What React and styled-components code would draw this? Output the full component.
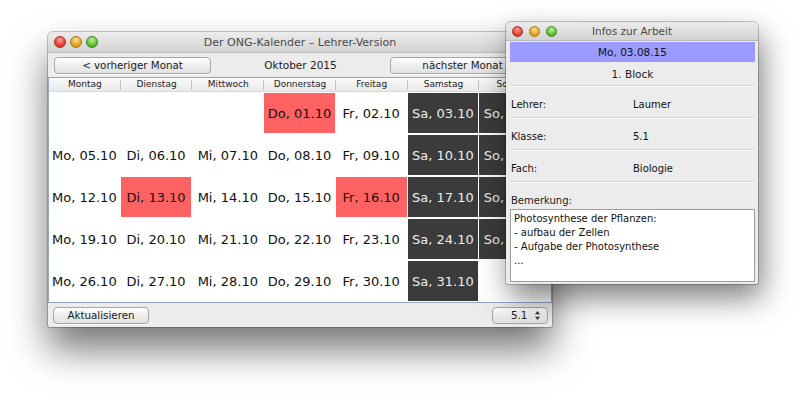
import React from 'react'
import styled, { createGlobalStyle } from 'styled-components'

const GlobalStyle = createGlobalStyle`
  html, body {
    margin: 0;
    padding: 0;
    background: #ffffff;
  }
  body {
    font-family: "DejaVu Sans", "Liberation Sans", sans-serif;
    color: #1a1a1a;
  }
`

const WEEKDAYS = ['Montag', 'Dienstag', 'Mittwoch', 'Donnerstag', 'Freitag', 'Samstag', 'Sonntag']
const SHORT = ['Mo', 'Di', 'Mi', 'Do', 'Fr', 'Sa', 'So']
const MARKED = [1, 13, 16]

// Oktober 2015 starts on a Thursday (index 3)
const buildMonth = () => {
    const cells = []
    for (let i = 0; i < 3; i++) cells.push(null)
    for (let d = 1; d <= 31; d++) cells.push(d)
    while (cells.length < 35) cells.push(null)
    return cells
}

const pad = (n) => String(n).padStart(2, '0')

const Lights = ({ size }) => (
    <LightGroup $size={size}>
        <Light $size={size} $c1="#ff9d94" $c2="#e0352b" $b="#a82a22" />
        <Light $size={size} $c1="#ffe08a" $c2="#e09a1a" $b="#a87516" />
        <Light $size={size} $c1="#bdf29a" $c2="#4fb52a" $b="#3b8a20" />
    </LightGroup>
)

const Stepper = () => (
    <svg width="7" height="11" viewBox="0 0 7 11">
        <path d="M3.5 1 L6 4.2 H1 Z" fill="#333" />
        <path d="M3.5 10 L6 6.8 H1 Z" fill="#333" />
    </svg>
)

const App = () => {
    const cells = buildMonth()
    return (
        <>
            <GlobalStyle />
            <Desktop>
                <Window $x={48} $y={32} $w={504} $h={295} $z={1} $shadow="0 22px 38px rgba(0, 0, 0, 0.55)">
                    <TitleBar $h={20}>
                        <Lights size={12} />
                        <Title $size={11}>Der ONG-Kalender – Lehrer-Version</Title>
                        <span />
                    </TitleBar>
                    <Toolbar>
                        <PushButton $w={157}>&lt; vorheriger Monat</PushButton>
                        <MonthLabel>Oktober 2015</MonthLabel>
                        <PushButton $w={157}>nächster Monat &gt;</PushButton>
                    </Toolbar>
                    <TableFrame>
                        <HeaderRow>
                            {WEEKDAYS.map((w, i) => (
                                <HeaderCell key={w} $last={i === 6}>{w}</HeaderCell>
                            ))}
                        </HeaderRow>
                        <DayGrid>
                            {cells.map((d, i) => {
                                const col = i % 7
                                let kind = 'plain'
                                if (d && col >= 5) kind = 'weekend'
                                else if (d && MARKED.includes(d)) kind = 'marked'
                                return (
                                    <DayCell key={i} $kind={kind}>
                                        {d ? `${SHORT[col]}, ${pad(d)}.10` : ''}
                                    </DayCell>
                                )
                            })}
                        </DayGrid>
                    </TableFrame>
                    <BottomBar>
                        <PushButton $w={96}>Aktualisieren</PushButton>
                        <Select>
                            <span>5.1</span>
                            <Stepper />
                        </Select>
                    </BottomBar>
                </Window>

                <Window $x={506} $y={22} $w={252} $h={262} $z={2} $shadow="4px 14px 30px rgba(0, 0, 0, 0.5)">
                    <TitleBar $h={18}>
                        <Lights size={11} />
                        <Title $size={10.5}>Infos zur Arbeit</Title>
                        <span />
                    </TitleBar>
                    <InfoBody>
                        <DateBar>Mo, 03.08.15</DateBar>
                        <BlockRow>1. Block</BlockRow>
                        <Divider />
                        <FieldRow>
                            <span>Lehrer:</span>
                            <span>Laumer</span>
                        </FieldRow>
                        <Divider />
                        <FieldRow>
                            <span>Klasse:</span>
                            <span>5.1</span>
                        </FieldRow>
                        <Divider />
                        <FieldRow>
                            <span>Fach:</span>
                            <span>Biologie</span>
                        </FieldRow>
                        <Divider />
                        <NoteLabel>Bemerkung:</NoteLabel>
                        <NoteBox>
                            {'Photosynthese der Pflanzen:\n- aufbau der Zellen\n- Aufgabe der Photosynthese\n...'}
                        </NoteBox>
                    </InfoBody>
                </Window>
            </Desktop>
        </>
    )
}

export default App

const Desktop = styled.div`
    position: relative;
    width: 800px;
    height: 395px;
    overflow: hidden;
    background: #ffffff;
`

const Window = styled.section`
    position: absolute;
    left: ${p => p.$x}px;
    top: ${p => p.$y}px;
    width: ${p => p.$w}px;
    height: ${p => p.$h}px;
    z-index: ${p => p.$z};
    display: flex;
    flex-direction: column;
    background: #ececec;
    border-radius: 5px 5px 2px 2px;
    box-shadow: 0 0 0 1px rgba(0, 0, 0, 0.22), ${p => p.$shadow};
    overflow: hidden;
`

const TitleBar = styled.header`
    flex: none;
    height: ${p => p.$h}px;
    display: grid;
    grid-template-columns: 1fr auto 1fr;
    align-items: center;
    background: linear-gradient(#ececec, #d3d3d3);
    border-bottom: 1px solid #b9b9b9;
`

const LightGroup = styled.div`
    display: flex;
    gap: ${p => (p.$size === 12 ? 4 : 6)}px;
    padding-left: 6px;
`

const Light = styled.span`
    width: ${p => p.$size}px;
    height: ${p => p.$size}px;
    border-radius: 50%;
    box-sizing: border-box;
    border: 1px solid ${p => p.$b};
    background: radial-gradient(circle at 50% 30%, ${p => p.$c1} 0%, ${p => p.$c2} 70%);
`

const Title = styled.span`
    font-size: ${p => p.$size}px;
    color: #4a4a4a;
    white-space: nowrap;
`

const Toolbar = styled.div`
    flex: none;
    height: 24px;
    display: flex;
    align-items: center;
    justify-content: space-between;
    padding: 0 5px 0 6px;
`

const PushButton = styled.button`
    width: ${p => p.$w}px;
    height: 17px;
    padding: 0;
    font-family: inherit;
    font-size: 10.3px;
    color: #1a1a1a;
    background: linear-gradient(#ffffff, #ececec 55%, #e2e2e2);
    border: 1px solid #a6a6a6;
    border-radius: 4px;
    box-shadow: 0 1px 0 rgba(255, 255, 255, 0.8);
`

const MonthLabel = styled.span`
    font-size: 10.5px;
    color: #1a1a1a;
`

const TableFrame = styled.div`
    flex: none;
    display: flex;
    flex-direction: column;
    background: #ffffff;
    border: 1px solid #8fa7c9;
    border-left-color: #9aa9bd;
`

const HeaderRow = styled.div`
    display: grid;
    grid-template-columns: repeat(7, 1fr);
    height: 13px;
    background: linear-gradient(#fafafa, #e9e9e9);
    border-bottom: 1px solid #d9d9d9;
`

const HeaderCell = styled.div`
    position: relative;
    font-size: 9px;
    line-height: 13px;
    text-align: center;
    color: #222;
    white-space: nowrap;
    overflow: hidden;

    &::after {
        content: '';
        display: ${p => (p.$last ? 'none' : 'block')};
        position: absolute;
        right: 0;
        top: 2px;
        bottom: 1px;
        width: 1px;
        background: #c4c4c4;
    }
`

const DayGrid = styled.div`
    display: grid;
    grid-template-columns: repeat(7, 1fr);
    grid-auto-rows: 42px;
`

const cellColors = {
    plain: ['transparent', '#111'],
    marked: ['#ff6262', '#111'],
    weekend: ['#3b3b3b', '#ececec'],
}

const DayCell = styled.div`
    margin: 1px 1px 1px 0;
    display: flex;
    align-items: center;
    justify-content: center;
    font-size: 13px;
    white-space: nowrap;
    overflow: hidden;
    background: ${p => cellColors[p.$kind][0]};
    color: ${p => cellColors[p.$kind][1]};
`

const BottomBar = styled.div`
    flex: 1;
    display: flex;
    align-items: center;
    justify-content: space-between;
    padding: 0 4px 0 5px;
`

const Select = styled.div`
    width: 56px;
    height: 17px;
    box-sizing: border-box;
    display: flex;
    align-items: center;
    justify-content: space-between;
    padding: 0 6px 0 18px;
    font-size: 10.3px;
    background: linear-gradient(#ffffff, #ececec 55%, #e2e2e2);
    border: 1px solid #a6a6a6;
    border-radius: 4px;
`

const InfoBody = styled.div`
    flex: 1;
    display: flex;
    flex-direction: column;
    padding: 1px 3px 2px 4px;
    font-size: 10px;
`

const DateBar = styled.div`
    height: 20px;
    display: flex;
    align-items: center;
    justify-content: center;
    background: #9a9aff;
    font-size: 10.5px;
    color: #111;
`

const BlockRow = styled.div`
    height: 23px;
    display: flex;
    align-items: center;
    justify-content: center;
    font-size: 10.5px;
`

const Divider = styled.div`
    height: 1px;
    margin: 0 1px;
    background: #d3d3d3;
    box-shadow: 0 1px 0 #f7f7f7;
`

const FieldRow = styled.div`
    height: 31px;
    box-sizing: border-box;
    display: grid;
    grid-template-columns: 122px 1fr;
    align-items: center;
    padding: 5px 0 0 1px;
    color: #111;
`

const NoteLabel = styled.div`
    height: 27px;
    display: flex;
    align-items: flex-end;
    padding: 0 0 3px 1px;
    box-sizing: border-box;
`

const NoteBox = styled.div`
    flex: 1;
    background: #ffffff;
    border: 1px solid #9c9c9c;
    padding: 2px 3px;
    line-height: 14px;
    white-space: pre-line;
    color: #111;
`
